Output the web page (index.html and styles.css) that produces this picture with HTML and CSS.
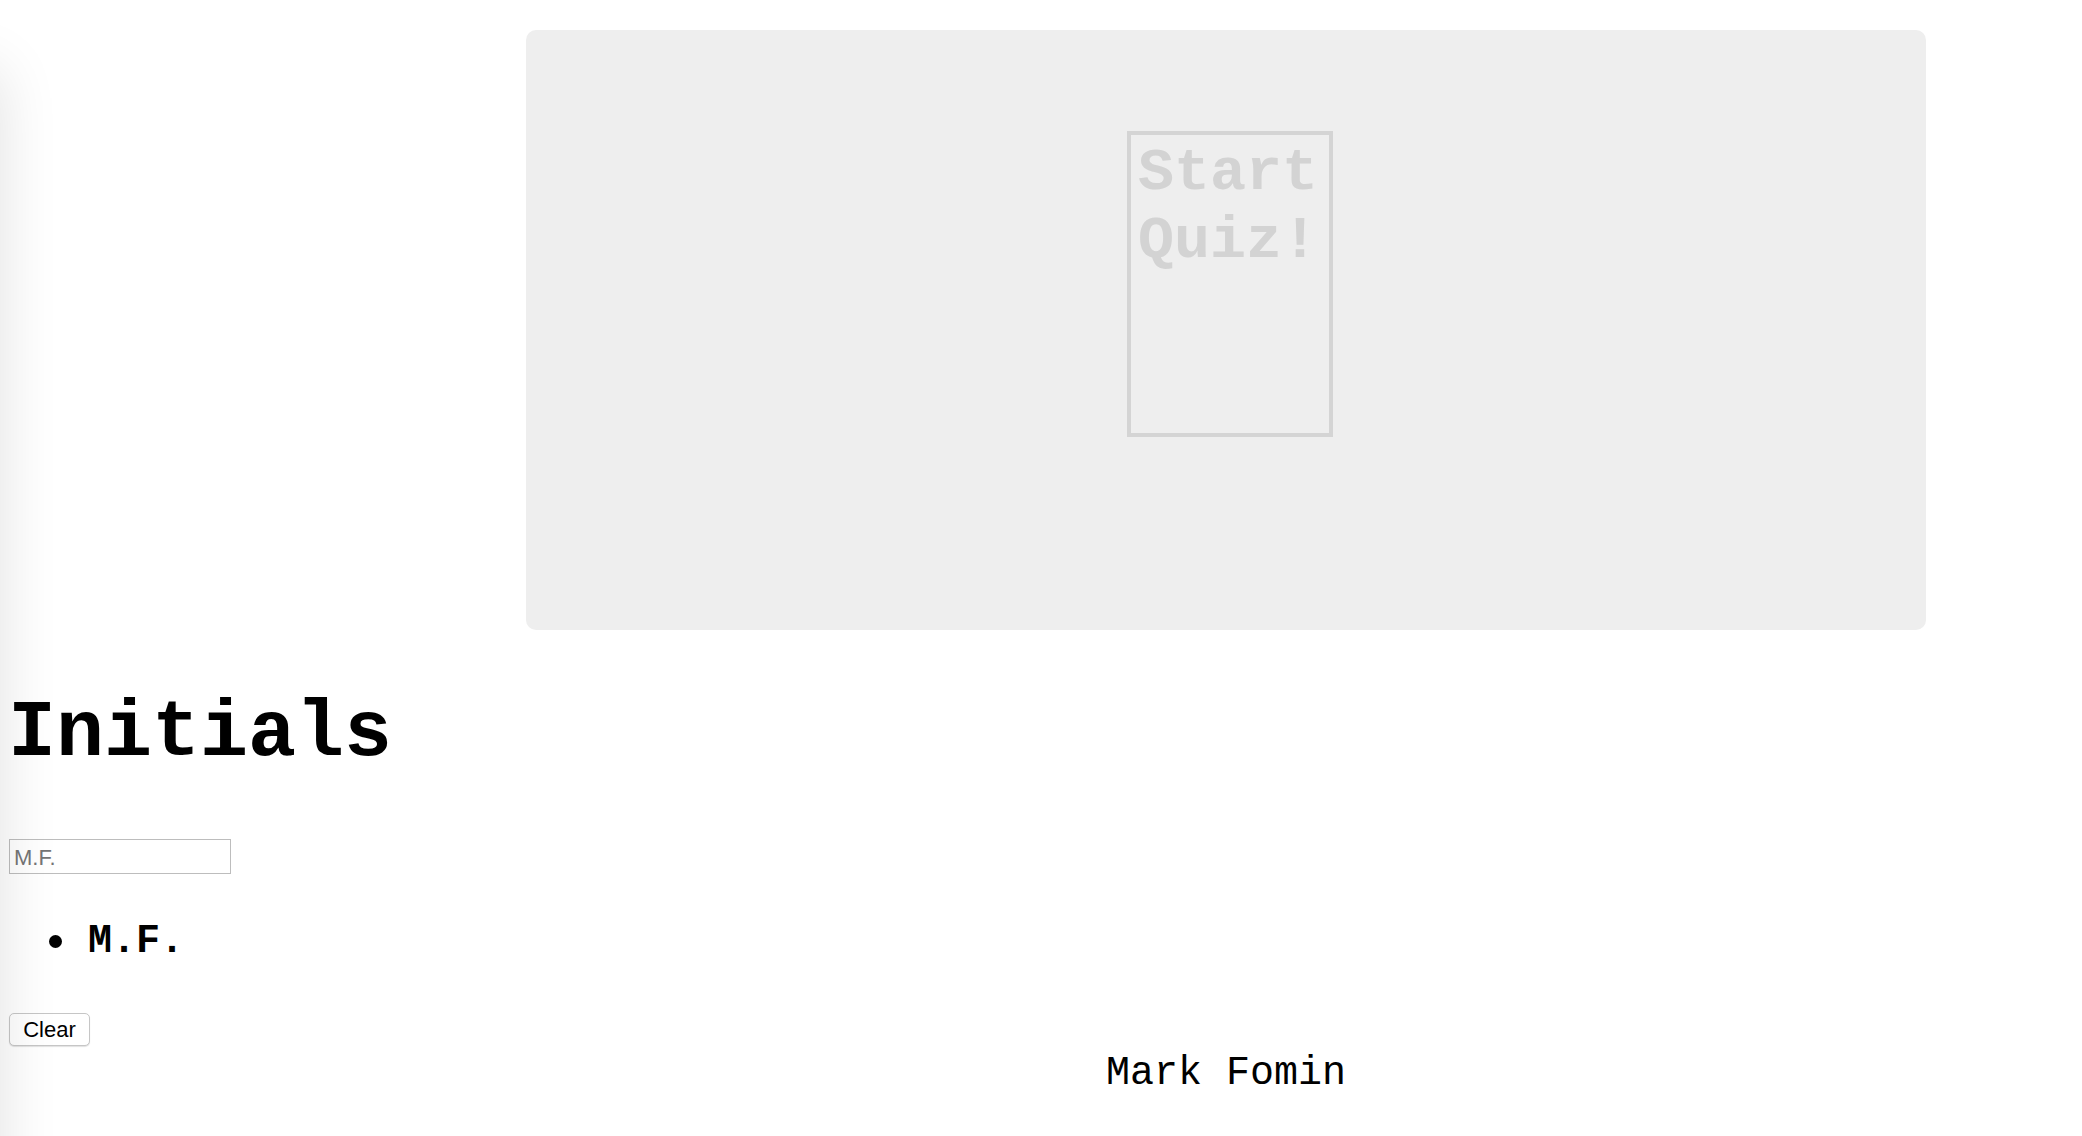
FILE: index.html
```html
<!DOCTYPE html>
<html lang="en">
<head>
<meta charset="utf-8">
<title>Quiz</title>
<link rel="stylesheet" href="styles.css">
</head>
<body>
<div class="edge-shadow"></div>
<section class="stage">
  <div class="start-quiz">Start Quiz!</div>
</section>
<h1 class="initials-title">Initials</h1>
<input class="initials-input" type="text" placeholder="M.F.">
<ul class="score-list">
  <li class="score-item">M.F.</li>
</ul>
<button class="clear-btn" type="button">Clear</button>
<footer class="footer">Mark Fomin</footer>
</body>
</html>
```
FILE: styles.css
```css
html, body {
  background: #ffffff;
}
body {
  margin: 8px;
  font-family: "Liberation Mono", "Courier New", monospace;
  color: #000;
  overflow: hidden;
}
.edge-shadow {
  position: fixed;
  left: -80px;
  top: 70px;
  width: 80px;
  height: 3000px;
  box-shadow: 0 0 60px rgba(0, 0, 0, 0.12);
  pointer-events: none;
}
.stage {
  box-sizing: border-box;
  margin: 22px 0 0 518px;
  width: 1400px;
  height: 600px;
  background: #eeeeee;
  border-radius: 10px;
  padding: 101px 0 0 8px;
  display: flex;
  justify-content: center;
  align-items: flex-start;
}
.start-quiz {
  box-sizing: border-box;
  width: 206px;
  height: 306px;
  border: 4px solid #d4d4d4;
  padding: 4px 7px 0 7px;
  color: #d3d3d3;
  font-weight: bold;
  font-size: 60px;
  line-height: normal;
}
.initials-title {
  font-size: 80px;
  font-weight: bold;
  margin: 58px 0 60px 0;
  line-height: normal;
}
.initials-input {
  display: block;
  box-sizing: border-box;
  width: 222px;
  height: 35px;
  margin: 0 0 0 1px;
  padding: 3px 4px 0 4px;
  border: 1px solid #bdbdbd;
  font-family: "Liberation Sans", Arial, sans-serif;
  font-size: 22px;
  color: #000;
  background: #fff;
}
.initials-input::placeholder {
  color: #757575;
}
.score-list {
  margin: 45px 0 49px 0;
  padding-left: 41px;
  list-style: none;
  font-size: 40px;
  font-weight: bold;
  line-height: normal;
}
.score-item {
  display: flex;
  align-items: center;
}
.score-item::before {
  content: "";
  width: 13px;
  height: 13px;
  border-radius: 50%;
  background: #000;
  margin-right: 26px;
  flex: none;
}
.clear-btn {
  display: block;
  box-sizing: border-box;
  width: 81px;
  height: 33px;
  margin: 0 0 0 1px;
  padding: 1px 0 0 0;
  font-family: "Liberation Sans", Arial, sans-serif;
  font-size: 22px;
  color: #000;
  background: #fff;
  border: 1px solid #c6c6c6;
  border-radius: 5px;
  box-shadow: 0 1px 1px rgba(0, 0, 0, 0.12);
}
.footer {
  margin: 5px 0 0 518px;
  width: 1400px;
  text-align: center;
  font-size: 40px;
  line-height: normal;
}
```
